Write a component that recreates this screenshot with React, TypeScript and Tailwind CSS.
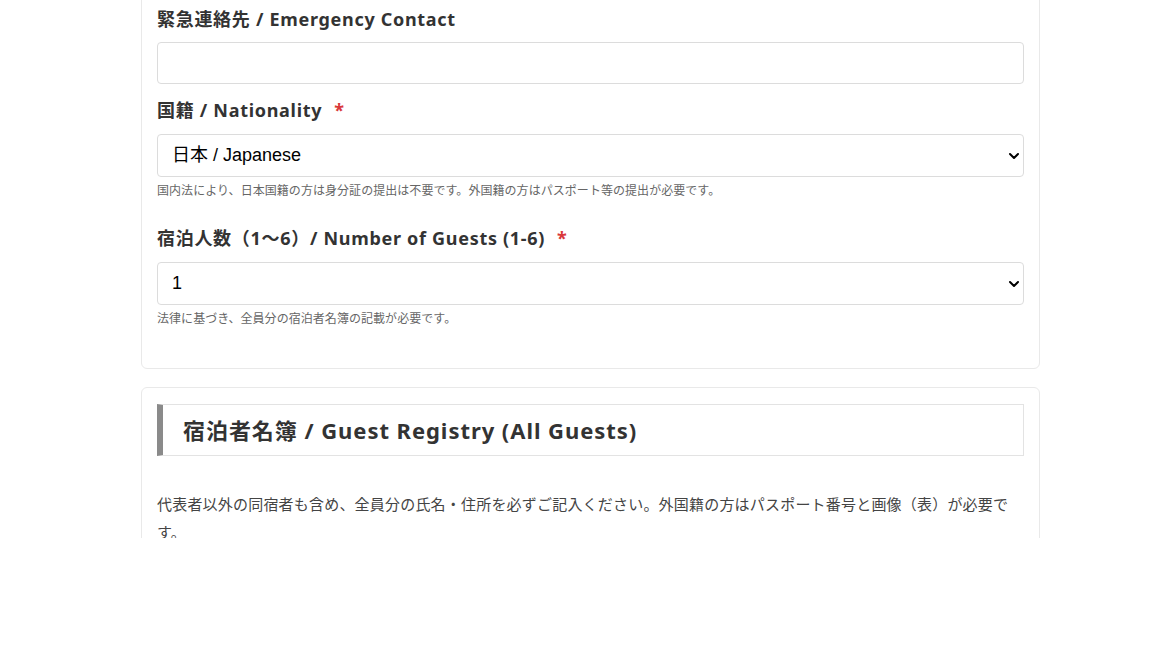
import { ChevronDown } from 'lucide-react';

const jp = "font-['Noto_Sans','Noto_Sans_CJK_JP',sans-serif]";

function Label({ text, required }: { text: string; required?: boolean }) {
  return (
    <div className="text-[18px] leading-[26px] font-bold tracking-[0.7px] text-[#333]">
      {text}
      {required && <span className="ml-[12px] text-[#d9383a]">*</span>}
    </div>
  );
}

function Select({ value }: { value: string }) {
  return (
    <div className="relative mt-[11px] h-[43px] rounded-[4px] border border-[#dcdcdc] bg-white flex items-center pl-[14px]">
      <span className="text-[18px] text-black font-['Liberation_Sans','Noto_Sans_CJK_JP',sans-serif]">{value}</span>
      <ChevronDown className="absolute right-[1px] top-[13px] w-[16px] h-[16px] text-black" strokeWidth={3} />
    </div>
  );
}

function Help({ text }: { text: string }) {
  return <p className="mt-[5px] text-[12px] leading-[18px] tracking-[0.05px] text-[#666]">{text}</p>;
}

export default function App() {
  return (
    <div className={`h-[538px] overflow-hidden bg-white ${jp}`}>
      <div className="ml-[141px] w-[899px]">
        {/* basic info card (continues above the fold) */}
        <section className="-mt-[40px] rounded-[6px] border border-[#e9e9e9] bg-white px-[15px] pt-[45px] pb-[40px]">
          <Label text="緊急連絡先 / Emergency Contact" />
          <div className="mt-[10px] h-[42px] rounded-[4px] border border-[#dcdcdc] bg-white" />

          <div className="mt-[13px]">
            <Label text="国籍 / Nationality" required />
            <Select value="日本 / Japanese" />
            <Help text="国内法により、日本国籍の方は身分証の提出は不要です。外国籍の方はパスポート等の提出が必要です。" />
          </div>

          <div className="mt-[25px]">
            <Label text="宿泊人数（1〜6）/ Number of Guests (1-6)" required />
            <Select value="1" />
            <Help text="法律に基づき、全員分の宿泊者名簿の記載が必要です。" />
          </div>
        </section>

        {/* guest registry */}
        <section className="mt-[18px] rounded-[6px] border border-[#e9e9e9] bg-white px-[15px] pt-[16px] pb-[30px]">
          <h2 className="h-[52px] flex items-center border border-[#e3e3e3] border-l-[6px] border-l-[#8a8a8a] pl-[20px] text-[22px] font-bold tracking-[0.95px] text-[#333]">
            宿泊者名簿 / Guest Registry (All Guests)
          </h2>
          <p className="mt-[34px] text-[15px] leading-[28px] tracking-[0.2px] text-[#444]">
            代表者以外の同宿者も含め、全員分の氏名・住所を必ずご記入ください。外国籍の方はパスポート番号と画像（表）が必要です。
          </p>
        </section>
      </div>
    </div>
  );
}
